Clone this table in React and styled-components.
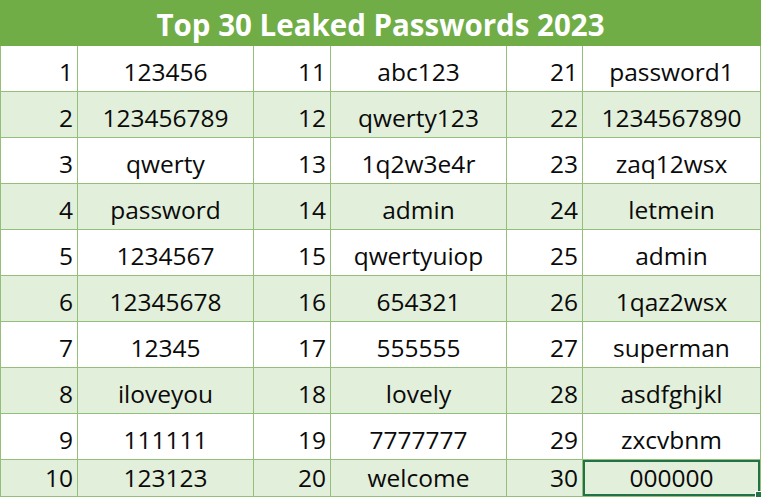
import React from 'react';
import styled, { createGlobalStyle } from 'styled-components';

const GlobalStyle = createGlobalStyle`
  html, body {
    margin: 0;
    padding: 0;
    background: #ffffff;
  }
  body {
    font-family: "Open Sans", "Liberation Sans", sans-serif;
  }
`;

const Sheet = styled.div`
  width: 761px;
  box-sizing: border-box;
`;

const Title = styled.div`
  height: 46px;
  box-sizing: border-box;
  background: #70ad47;
  color: #ffffff;
  font-weight: 700;
  font-size: 29.5px;
  display: flex;
  align-items: center;
  justify-content: center;
  padding-top: 2px;
`;

const Grid = styled.div`
  display: grid;
  grid-template-columns: 77px 176px 77px 176px 76px 178px;
  grid-template-rows: repeat(9, 46px) 37px;
  width: 760px;
  border-left: 1px solid #94bf7b;
`;

const Cell = styled.div`
  position: relative;
  box-sizing: border-box;
  border-right: 1px solid #94bf7b;
  border-bottom: 1px solid #94bf7b;
  background: ${(p) => (p.$alt ? '#e2efda' : '#ffffff')};
  color: #0a0a0a;
  font-size: 24.5px;
  display: flex;
  align-items: center;
  justify-content: ${(p) => (p.$num ? 'flex-end' : 'center')};
  padding-top: ${(p) => (p.$last ? '0' : '6px')};
  padding-bottom: ${(p) => (p.$last ? '1px' : '0')};
  padding-right: ${(p) => (p.$num ? '4px' : '0')};
  white-space: nowrap;
  ${(p) =>
    p.$selected &&
    `
    box-shadow: inset 0 0 0 2px #217346;
  `}
`;

const Handle = styled.span`
  position: absolute;
  right: -2px;
  bottom: -2px;
  width: 5px;
  height: 5px;
  background: #217346;
  border: 1px solid #ffffff;
`;

const passwords = [
  '123456', '123456789', 'qwerty', 'password', '1234567',
  '12345678', '12345', 'iloveyou', '111111', '123123',
  'abc123', 'qwerty123', '1q2w3e4r', 'admin', 'qwertyuiop',
  '654321', '555555', 'lovely', '7777777', 'welcome',
  'password1', '1234567890', 'zaq12wsx', 'letmein', 'admin',
  '1qaz2wsx', 'superman', 'asdfghjkl', 'zxcvbnm', '000000',
];

const App = () => {
  const rows = [];
  for (let r = 0; r < 10; r++) {
    for (let c = 0; c < 3; c++) {
      const i = c * 10 + r;
      const alt = r % 2 === 1;
      const last = r === 9;
      const selected = i === 29;
      rows.push(
        <Cell key={`n${i}`} $num $alt={alt} $last={last}>
          {i + 1}
        </Cell>
      );
      rows.push(
        <Cell key={`p${i}`} $alt={alt} $last={last} $selected={selected}>
          {passwords[i]}
          {selected && <Handle />}
        </Cell>
      );
    }
  }

  return (
    <Sheet>
      <GlobalStyle />
      <Title>Top 30 Leaked Passwords 2023</Title>
      <Grid>{rows}</Grid>
    </Sheet>
  );
};

export default App;
